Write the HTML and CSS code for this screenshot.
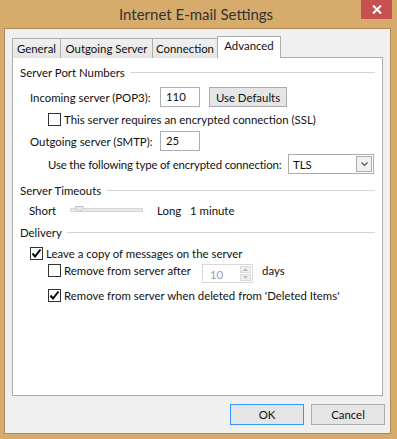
FILE: index.html
```html
<!DOCTYPE html>
<html lang="en">
<head>
    <meta charset="UTF-8">
    <title>Internet E-mail Settings</title>
    <link rel="stylesheet" href="styles.css">
</head>
<body>
    <div class="window">
        <div class="titlebar">
            <span></span>
            <span class="title">Internet E-mail Settings</span>
            <button class="close-btn">
                <svg width="10" height="9" viewBox="0 0 10 9">
                    <path d="M1 0.5 L9 8.5 M9 0.5 L1 8.5" stroke="#fff" stroke-width="2"/>
                </svg>
            </button>
        </div>

        <div class="client">
            <!-- Tabs -->
            <ul class="tabs">
                <li class="tab tab-general">General</li>
                <li class="tab tab-outgoing">Outgoing Server</li>
                <li class="tab tab-connection">Connection</li>
                <li class="tab tab-advanced active">Advanced</li>
            </ul>

            <div class="panel">
                <div class="group-title">Server Port Numbers</div>

                <div class="row row-incoming">
                    <span class="label label-port">Incoming server (POP3):</span>
                    <div class="textbox">110</div>
                    <button class="btn btn-defaults">Use Defaults</button>
                </div>

                <div class="row row-check indent">
                    <span class="checkbox"></span>
                    <span class="check-text">This server requires an encrypted connection (SSL)</span>
                </div>

                <div class="row row-outgoing">
                    <span class="label label-port">Outgoing server (SMTP):</span>
                    <div class="textbox">25</div>
                </div>

                <div class="row row-encrypt indent">
                    <span class="label label-encrypt">Use the following type of encrypted connection:</span>
                    <div class="dropdown">
                        <span>TLS</span>
                        <span class="dropdown-arrow">
                            <svg width="7" height="5" viewBox="0 0 7 5">
                                <path d="M0.5 0.5 L3.5 3.5 L6.5 0.5" stroke="#555" stroke-width="1.2" fill="none"/>
                            </svg>
                        </span>
                    </div>
                </div>

                <div class="group-title group-timeouts">Server Timeouts</div>

                <div class="row row-slider">
                    <span class="slider-label">Short</span>
                    <div class="slider">
                        <div class="slider-track"></div>
                        <svg class="slider-thumb" width="9" height="6" viewBox="0 0 9 6">
                            <path d="M0.5 0.5 H8.5 V2.5 L4.5 5.5 L0.5 2.5 Z" fill="#e9e9e9" stroke="#c4c4c4"/>
                        </svg>
                    </div>
                    <span class="slider-long">Long</span>
                    <span>1 minute</span>
                </div>

                <div class="group-title group-delivery">Delivery</div>

                <div class="row row-check row-leave">
                    <span class="checkbox checked">
                        <svg width="11" height="11" viewBox="0 0 11 11">
                            <path d="M1.5 5.5 L4 8.5 L9.5 1.5" stroke="#000" stroke-width="2" fill="none"/>
                        </svg>
                    </span>
                    <span class="check-text">Leave a copy of messages on the server</span>
                </div>

                <div class="row row-remove indent">
                    <span class="checkbox"></span>
                    <span class="check-text remove-text">Remove from server after</span>
                    <div class="spinner">
                        <span class="spinner-value">10</span>
                        <span class="spinner-buttons">
                            <span class="spin-up">
                                <svg width="5" height="3" viewBox="0 0 5 3"><path d="M0 3 L2.5 0 L5 3 Z" fill="#b8b8b8"/></svg>
                            </span>
                            <span class="spin-down">
                                <svg width="5" height="3" viewBox="0 0 5 3"><path d="M0 0 L2.5 3 L5 0 Z" fill="#b8b8b8"/></svg>
                            </span>
                        </span>
                    </div>
                    <span class="days">days</span>
                </div>

                <div class="row row-check row-deleted indent">
                    <span class="checkbox checked">
                        <svg width="11" height="11" viewBox="0 0 11 11">
                            <path d="M1.5 5.5 L4 8.5 L9.5 1.5" stroke="#000" stroke-width="2" fill="none"/>
                        </svg>
                    </span>
                    <span class="check-text">Remove from server when deleted from 'Deleted Items'</span>
                </div>
            </div>

            <!-- Dialog buttons -->
            <div class="dialog-buttons">
                <button class="btn btn-dialog default">OK</button>
                <button class="btn btn-dialog">Cancel</button>
            </div>
        </div>
    </div>
</body>
</html>
```

FILE: styles.css
```css
/* Global */
body {
    margin: 0;
    padding: 0;
    font-family: 'Lato', 'Noto Sans', sans-serif;
    font-size: 11.4px;
    color: #111;
    white-space: nowrap;
}

/* Window frame */
.window {
    width: 397px;
    height: 439px;
    background-color: #d6ab6b;
    box-sizing: border-box;
    padding-bottom: 5px;
    display: flex;
    flex-direction: column;
}

.titlebar {
    height: 28px;
    display: grid;
    grid-template-columns: 1fr auto 1fr;
    align-items: start;
    padding-right: 5px;
}

.title {
    font-size: 15px;
    color: #333;
    line-height: 28px;
}

.close-btn {
    justify-self: end;
    width: 31px;
    height: 19px;
    border: none;
    padding: 0;
    background-color: #c75050;
    display: flex;
    align-items: center;
    justify-content: center;
}

.client {
    flex-grow: 1;
    margin: 0 6px 0 4px;
    background-color: #f0f0f0;
    border: 1px solid #b08a52;
    padding: 7px 7px 0 7px;
    display: flex;
    flex-direction: column;
}

/* Tabs */
.tabs {
    list-style: none;
    margin: 0 0 -1px 0;
    padding: 0;
    display: flex;
    height: 22px;
    position: relative;
    z-index: 1;
}

.tab {
    box-sizing: border-box;
    height: 20px;
    margin-top: 2px;
    margin-left: -1px;
    border: 1px solid #acacac;
    border-bottom: none;
    background: linear-gradient(#f0f0f0, #e5e5e5);
    text-align: center;
    line-height: 19px;
}

.tab-general { width: 49px; margin-left: 0; }
.tab-outgoing { width: 93px; }
.tab-connection { width: 66px; }

.tab.active {
    width: 64px;
    height: 22px;
    margin-top: 0;
    background: #fff;
    line-height: 18px;
}

.panel {
    box-sizing: border-box;
    width: 371px;
    height: 339px;
    background-color: #fff;
    border: 1px solid #acacac;
    padding: 6px 7px 0 7px;
}

/* Group headers */
.group-title {
    display: flex;
    align-items: center;
    height: 16px;
}

.group-title::after {
    content: "";
    flex-grow: 1;
    height: 1px;
    background-color: #d5d5d5;
    margin-left: 5px;
}

.group-timeouts { margin-top: 8px; }
.group-delivery { margin-top: 6px; }

/* Rows */
.row {
    display: flex;
    align-items: center;
}

.indent {
    padding-left: 28px;
}

.row-incoming {
    height: 20px;
    margin-top: 7px;
    padding-left: 10px;
}

.row-outgoing {
    height: 20px;
    margin-top: 5px;
    padding-left: 10px;
}

.row-check {
    height: 13px;
    margin-top: 6px;
}

.row-encrypt {
    height: 20px;
    margin-top: 3px;
}

.label-port {
    width: 130px;
}

.label-encrypt {
    width: 240px;
    letter-spacing: -0.15px;
}

.textbox {
    box-sizing: border-box;
    width: 40px;
    height: 20px;
    border: 1px solid #abadb3;
    padding-left: 5px;
    line-height: 18px;
}

.btn {
    font-family: inherit;
    font-size: 11.4px;
    color: #111;
    background-color: #e5e5e5;
    border: 1px solid #acacac;
    padding: 0;
}

.btn-defaults {
    width: 78px;
    height: 20px;
    margin-left: 9px;
}

/* Checkboxes */
.checkbox {
    box-sizing: border-box;
    width: 13px;
    height: 13px;
    border: 1px solid #333;
    background-color: #fff;
    display: flex;
    align-items: center;
    justify-content: center;
    flex-shrink: 0;
}

.check-text {
    margin-left: 3px;
    line-height: 13px;
}

/* Dropdown */
.dropdown {
    box-sizing: border-box;
    width: 86px;
    height: 20px;
    border: 1px solid #acacac;
    display: flex;
    align-items: center;
    justify-content: space-between;
    padding: 0 1px 0 4px;
}

.dropdown-arrow {
    box-sizing: border-box;
    width: 16px;
    height: 16px;
    border: 1px solid #acacac;
    background-color: #f0f0f0;
    display: flex;
    align-items: center;
    justify-content: center;
}

/* Slider */
.row-slider {
    height: 16px;
    margin-top: 4px;
    padding-left: 9px;
}

.slider-label {
    width: 41px;
}

.slider {
    position: relative;
    width: 73px;
    height: 16px;
    display: flex;
    align-items: center;
}

.slider-track {
    box-sizing: border-box;
    width: 100%;
    height: 4px;
    background-color: #e7eaea;
    border: 1px solid #d6d6d6;
}

.slider-thumb {
    position: absolute;
    left: 5px;
    top: 4px;
}

.slider-long {
    margin-left: 14px;
    width: 33px;
}

/* Delivery */
.row-leave {
    margin-top: 7px;
    padding-left: 10px;
}

.row-remove {
    height: 19px;
    margin-top: 4px;
    align-items: flex-start;
}

.remove-text {
    width: 138px;
}

.spinner {
    box-sizing: border-box;
    width: 51px;
    height: 19px;
    border: 1px solid #d9d9d9;
    display: flex;
    justify-content: space-between;
    padding: 1px;
}

.spinner-value {
    color: #a0a0a0;
    padding-left: 6px;
    line-height: 17px;
}

.spinner-buttons {
    width: 11px;
    display: flex;
    flex-direction: column;
    gap: 1px;
}

.spinner-buttons span {
    flex-grow: 1;
    background-color: #f0f0f0;
    border: 1px solid #dcdcdc;
    display: flex;
    align-items: center;
    justify-content: center;
}

.days {
    margin-left: 9px;
    line-height: 13px;
}

.row-deleted {
    margin-top: 6px;
}

/* Dialog buttons */
.dialog-buttons {
    display: flex;
    justify-content: flex-end;
    gap: 7px;
    margin-top: 8px;
    margin-right: -2px;
}

.btn-dialog {
    width: 74px;
    height: 21px;
}

.btn-dialog.default {
    border-color: #3399ff;
}
```
